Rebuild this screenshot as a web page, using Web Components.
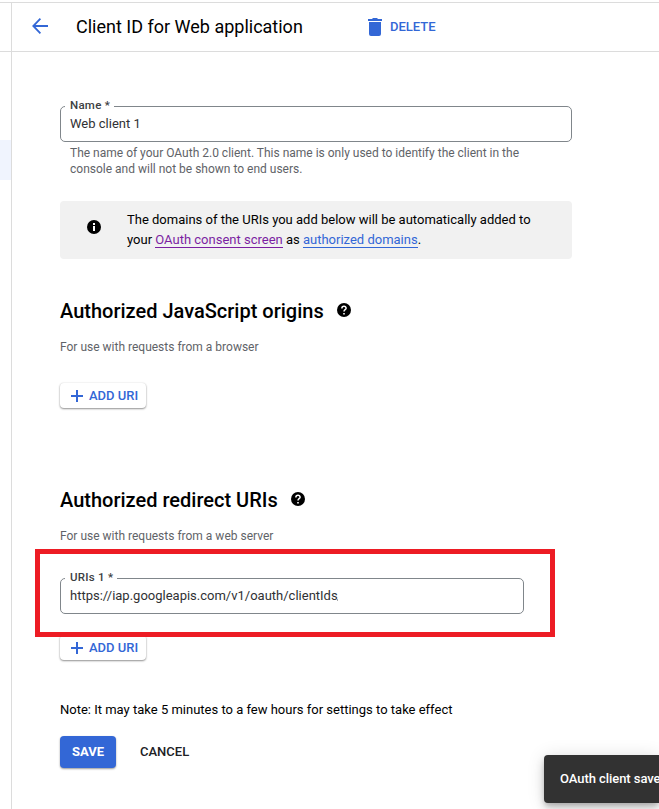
<!DOCTYPE html>
<html lang="en">
<head>
<meta charset="utf-8">
<title>Client ID for Web application</title>
<style>
html,body{margin:0;height:100%;overflow:hidden;background:#fff}
body{font-family:Roboto,"Liberation Sans",sans-serif;color:#000;font-size:13px}
</style>
</head>
<body>
<oauth-page></oauth-page>
<script>
function define(name, html) {
  const template = document.createElement('template');
  template.innerHTML = html;
  customElements.define(name, class extends HTMLElement {
    constructor() {
      super();
      this.attachShadow({ mode: 'open' }).append(template.content.cloneNode(true));
    }
  });
}

define('page-header', `
<style>
:host{display:flex;align-items:center;box-sizing:border-box;height:50px;border-top:1px solid #dcdcdc;border-bottom:1px solid #dcdcdc}
.back{display:block;margin:-2px 0 0 20px}
h1{margin:0 0 0 28px;font-size:18px;font-weight:400;line-height:24px;width:292px;color:#000}
.del{display:flex;align-items:center;gap:8px;color:#3367d6;font-size:13px;font-weight:500;line-height:18px}
svg{display:block}
</style>
<svg class="back" width="16" height="16" viewBox="0 0 16 16" fill="none" stroke="#3367d6" stroke-width="1.8"><path d="M16 8H1.5M8.4.7 1.3 8l7.1 7.3"/></svg>
<h1><slot></slot></h1>
<span class="del"><svg width="14" height="18" viewBox="0 0 14 18" fill="#3367d6"><path d="M4 1 5 0h4l1 1h4v2H0V1zM1 4h12v12a2 2 0 0 1-2 2H3a2 2 0 0 1-2-2z"/></svg><slot name="action"></slot></span>`);

define('outlined-field', `
<style>
:host{display:block;position:relative;box-sizing:border-box;height:36px;border:1px solid #80868b;border-radius:5px;padding:8px 9px;line-height:18px;font-size:13px;color:#303134}
.label{position:absolute;top:-9px;left:4px;box-sizing:border-box;width:var(--notch);height:14px;padding-left:5px;background:#fff;font-size:11.5px;line-height:14px;font-weight:500;letter-spacing:.25px;color:#3c4043;white-space:nowrap}
</style><span class="label"><slot name="label"></slot></span><slot></slot>`);

define('info-banner', `
<style>
:host{display:flex;align-items:center;box-sizing:border-box;width:512px;height:58px;border-radius:4px;background:#f1f1f1;padding-left:27px}
svg{flex:none;display:block;margin:-6px 26px 0 0}
p{margin:0 0 1px;font-size:13px;line-height:20px;white-space:nowrap}
</style>
<svg width="14" height="14" viewBox="0 0 14 14"><circle cx="7" cy="7" r="7"/><path fill="#fff" d="M6 3h2v2H6zM6 6h2v5H6z"/></svg>
<p><slot></slot></p>`);

define('text-link', `
<style>:host{color:var(--link,#3367d6);border-bottom:1px solid currentColor}</style><slot></slot>`);

define('section-heading', `
<style>
:host{display:block}
div{display:flex;align-items:center;gap:13px;height:28px}
h2{margin:0;font-size:20px;line-height:28px;font-weight:500;white-space:nowrap}
svg{display:block;margin-top:-2px}
p{margin:14px 0 0;font-size:12px;line-height:16px;color:#5f6368}
</style>
<div><h2><slot></slot></h2><svg width="14" height="14" viewBox="0 0 14 14"><circle cx="7" cy="7" r="7"/><path d="M4.9 5.6V5.2a2.1 2 0 1 1 4.2 0c0 1.4-2.1 1.6-2.1 3.2" fill="none" stroke="#fff" stroke-width="1.5"/><path fill="#fff" d="M6.2 9.9h1.6v1.5H6.2z"/></svg></div>
<p><slot name="hint"></slot></p>`);

define('add-button', `
<style>
:host{display:flex;align-items:center;box-sizing:border-box;width:86px;height:25px;padding:0 0 0 11px;gap:6px;border-radius:4px;background:#fff;box-shadow:0 1px 2px rgba(0,0,0,.42),0 0 2px rgba(0,0,0,.1);color:#3367d6;font-size:13px;line-height:17px;font-weight:500;white-space:nowrap}
svg{display:block;flex:none}
</style>
<svg width="12" height="12" viewBox="0 0 12 12" fill="#3367d6"><path d="M5 0h2v5h5v2H7v5H5V7H0V5h5z"/></svg><slot></slot>`);

define('form-actions', `
<style>
:host{display:flex;align-items:center;gap:24px;font-size:13px;line-height:32px;font-weight:500;color:#202124}
.save{box-sizing:border-box;width:56px;height:32px;text-align:center;background:#3367d6;color:#fff;border-radius:4px;box-shadow:0 1px 2px rgba(0,0,0,.4);font-weight:700}
</style>
<span class="save"><slot name="save"></slot></span><slot name="cancel"></slot>`);

define('snack-bar', `
<style>
:host{position:absolute;left:544px;top:755px;width:115px;height:48px;box-sizing:border-box;padding-left:16px;border-radius:4px 0 0 4px;background:#323232;color:#fff;font-size:13px;line-height:48px;font-weight:500;letter-spacing:-.06px;white-space:nowrap;box-shadow:0 3px 5px -1px rgba(0,0,0,.2),0 6px 10px rgba(0,0,0,.14),0 1px 18px rgba(0,0,0,.12)}
</style><slot></slot>`);

define('oauth-page', `
<style>
:host{display:block;position:relative;box-sizing:border-box;width:659px;height:809px;overflow:hidden;padding-top:2px}
.cols{display:grid;grid-template-columns:11px 1fr;height:807px}
.rail{box-sizing:border-box;border-top:1px solid #dcdcdc}
.rail .bar{height:48px;border-bottom:1px solid #dcdcdc}
.rail .active{height:40px;margin-top:88px;background:#f0f4fe}
main{border-left:1px solid #dcdcdc}
.form{padding:54px 0 0 48px}
.name{width:512px;--notch:49px}
.uri{width:464px;--notch:52px;margin-top:34px}
.help{margin:3px 0 0 10px;font-size:12px;line-height:16px;color:#5f6368;white-space:nowrap}
info-banner{margin-top:24px}
.s1{margin-top:38px}
.s2{margin-top:78px}
.b1{margin-top:28px}
.b2{margin-top:21px}
.note{margin:41px 0 0;line-height:18px}
form-actions{margin-top:17px}
.cut{display:inline-block;width:1px;height:2px;background:#aaa;margin-left:-1px;vertical-align:-1px}
.frame{position:absolute;left:35px;top:549px;width:520px;height:88px;box-sizing:border-box;border:5px solid #ed1c24}
</style>
<div class="cols">
 <div class="rail"><div class="bar"></div><div class="active"></div></div>
 <main>
  <page-header>Client ID for Web application<span slot="action">DELETE</span></page-header>
  <div class="form">
   <outlined-field class="name"><span slot="label">Name *</span>Web client 1</outlined-field>
   <p class="help">The name of your OAuth 2.0 client. This name is only used to identify the client in the<br>console and will not be shown to end users.</p>
   <info-banner>The domains of the URIs you add below will be automatically added to<br>your <text-link style="--link:#7b1fa2">OAuth consent screen</text-link> as <text-link>authorized domains</text-link>.</info-banner>
   <section-heading class="s1">Authorized JavaScript origins<span slot="hint">For use with requests from a browser</span></section-heading>
   <add-button class="b1">ADD URI</add-button>
   <section-heading class="s2">Authorized redirect URIs<span slot="hint">For use with requests from a web server</span></section-heading>
   <outlined-field class="uri"><span slot="label">URIs 1 *</span>https://iap.googleapis.com/v1/oauth/clientIds<i class="cut"></i></outlined-field>
   <add-button class="b2">ADD URI</add-button>
   <p class="note">Note: It may take 5 minutes to a few hours for settings to take effect</p>
   <form-actions><span slot="save">SAVE</span><span slot="cancel">CANCEL</span></form-actions>
  </div>
 </main>
</div>
<div class="frame"></div>
<snack-bar>OAuth client save</snack-bar>`);
</script>
</body>
</html>
